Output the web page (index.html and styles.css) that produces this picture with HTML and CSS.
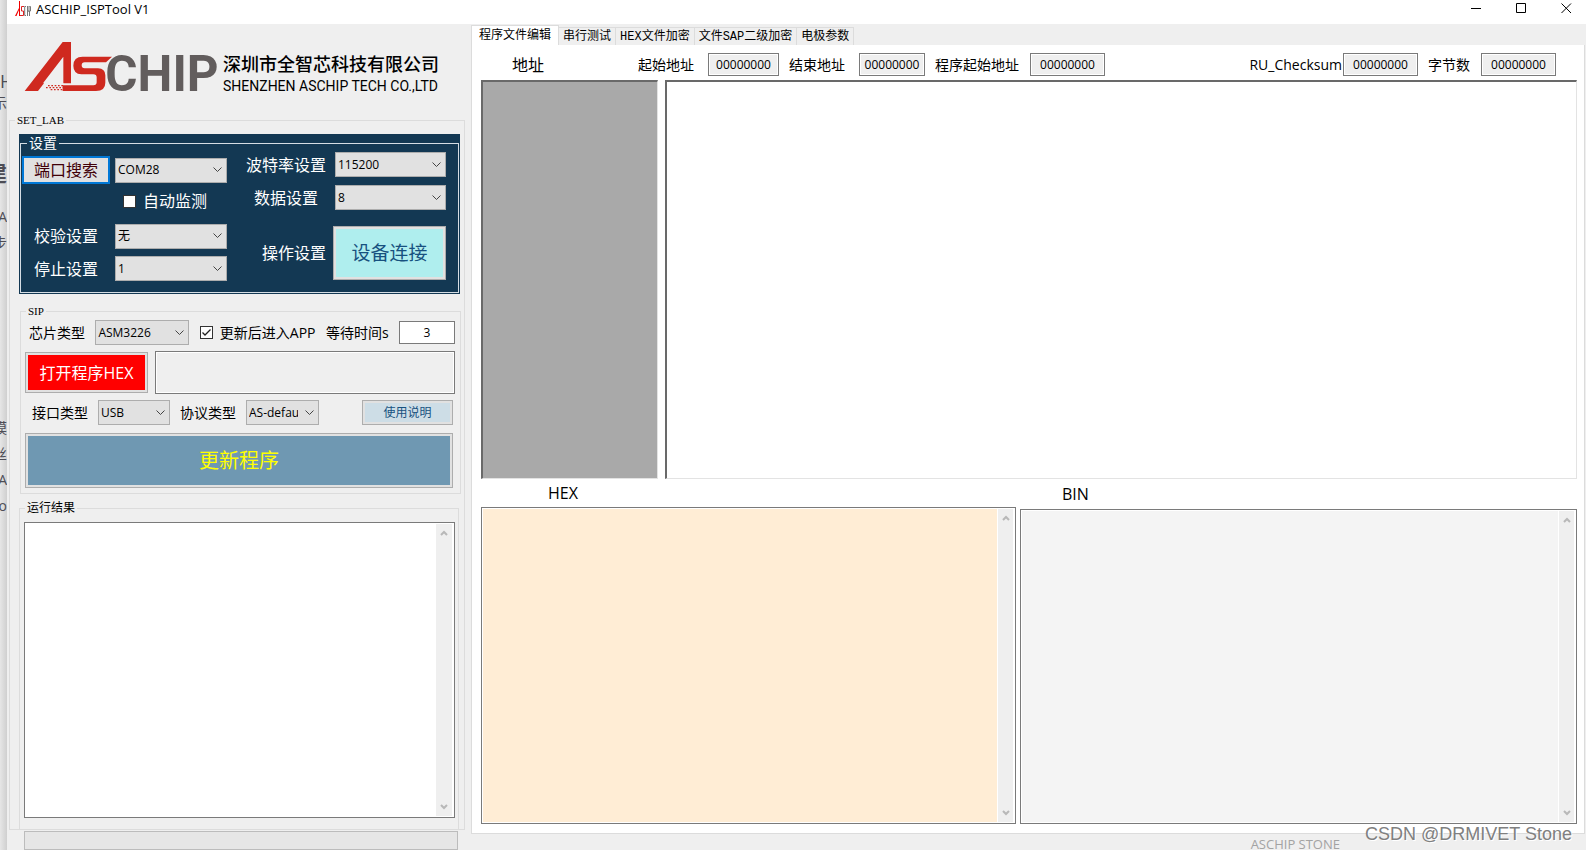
FILE: index.html
```html
<!DOCTYPE html>
<html lang="zh-CN">
<head>
<meta charset="utf-8">
<title>ASCHIP_ISPTool V1</title>
<link rel="stylesheet" href="styles.css">
</head>
<body>
<div class="desktop">
  <aside class="behind" aria-hidden="true">
    <span class="behind-line behind-h">H</span>
    <span class="behind-line">示</span>
    <span class="behind-line behind-bold">建</span>
    <span class="behind-line">A</span>
    <span class="behind-line behind-gap">步</span>
    <span class="behind-line">模</span>
    <span class="behind-line">丝</span>
    <span class="behind-line">A</span>
    <span class="behind-line">ro</span>
  </aside>

  <div class="window">
    <header class="titlebar">
      <svg class="app-icon" viewBox="0 0 16 16" aria-hidden="true">
        <path d="M0 15 L4 7 V0 H5 V15 H4 V9 L1.500 15Z" fill="#f00000"/>
        <path d="M9 5.500 H6.500 V10 H8.500 V14.500 H5" fill="none" stroke="#e02020"/>
        <path d="M11 5.500 H9.700 V14.500 H11 M12.500 5 V15 M12.500 10 H14 M14 5 V11 M14.500 5.500 H15.500 V10 H14.500 V15" fill="none" stroke="#777"/>
      </svg>
      <h1 class="title">ASCHIP_ISPTool V1</h1>
      <div class="window-buttons">
        <button class="window-button" aria-label="最小化"><svg viewBox="0 0 11 11"><path d="M0 5.500 H10"/></svg></button>
        <button class="window-button" aria-label="最大化"><svg viewBox="0 0 11 11"><path d="M.5 .5 H9.500 V9.500 H.5Z"/></svg></button>
        <button class="window-button" aria-label="关闭"><svg viewBox="0 0 11 11"><path d="M.5 .5 L10 10 M10 .5 L.5 10"/></svg></button>
      </div>
    </header>

    <div class="content">
      <section class="side">
        <div class="brand">
          <svg class="brand-mark" viewBox="0 0 600 186" role="img" aria-label="ASCHIP">
            <path fill="#cf291f" d="M14 165 L128 18 H153 V142 H130 V62 L70 140 L78 152 L72 165Z"/>
            <path fill="#efefef" d="M54 165 L72 142 H130 V165Z"/>
            <path fill="#cf291f" d="M276 62 L258 79 H194 Q185 79 185 88 Q185 97 194 97 H234 Q256 98 256 118 V140 Q256 165 228 165 H128 V148 H220 Q230 148 230 139 V124 Q230 115 220 115 H184 Q160 113 160 89 Q160 62 188 62Z"/>
            <path fill="none" stroke="#cf291f" stroke-width="4" stroke-dasharray="5 5" d="M84 149 H130 M78 155 H130 M92 161 H130"/>
            <text class="brand-chip" x="256" y="165">CHIP</text>
          </svg>
          <div class="brand-names">
            <span class="brand-cn">深圳市全智芯科技有限公司</span>
            <span class="brand-en">SHENZHEN ASCHIP TECH CO.,LTD</span>
          </div>
        </div>

        <fieldset class="group set-lab">
          <legend class="legend-mono">SET_LAB</legend>

          <div class="serial">
            <fieldset class="serial-group">
              <legend>设置</legend>
              <div class="serial-left">
                <button class="search-button">端口搜索</button>
                <select class="select" aria-label="端口"><option>COM28</option></select>
                <label class="auto-check"><input type="checkbox" class="check check-light">自动监测</label>
                <label for="parity">校验设置</label>
                <select class="select" id="parity"><option>无</option></select>
                <label for="stop">停止设置</label>
                <select class="select" id="stop"><option>1</option></select>
              </div>
              <div class="serial-right">
                <label for="baud">波特率设置</label>
                <select class="select" id="baud"><option>115200</option></select>
                <label for="data">数据设置</label>
                <select class="select" id="data"><option>8</option></select>
                <span class="action-label">操作设置</span>
                <button class="connect-button">设备连接</button>
              </div>
            </fieldset>
          </div>

          <fieldset class="group sip">
            <legend class="legend-mono">SIP</legend>
            <div class="sip-chip">
              <label for="chip">芯片类型</label>
              <select class="select select-chip" id="chip"><option>ASM3226</option></select>
              <label class="app-check"><input type="checkbox" class="check" checked>更新后进入APP</label>
              <label for="wait">等待时间s</label>
              <input class="wait" id="wait" value="3">
            </div>
            <div class="sip-file">
              <button class="open-button">打开程序HEX</button>
              <input class="file-path" aria-label="程序文件" readonly>
            </div>
            <div class="sip-port">
              <label for="port">接口类型</label>
              <select class="select select-port" id="port"><option>USB</option></select>
              <label for="protocol">协议类型</label>
              <select class="select select-protocol" id="protocol"><option>AS-default</option></select>
              <button class="help-button">使用说明</button>
            </div>
            <button class="update-button">更新程序</button>
          </fieldset>

          <fieldset class="group results">
            <legend>运行结果</legend>
            <div class="pane">
              <textarea class="pane-text" aria-label="运行结果" readonly></textarea>
              <div class="scroll"><svg viewBox="0 0 8 6"><path d="M1 5 L4 2 L7 5"/></svg><svg viewBox="0 0 8 6"><path d="M1 1 L4 4 L7 1"/></svg></div>
            </div>
          </fieldset>
        </fieldset>

        <div class="progress" role="progressbar" aria-label="进度"></div>
      </section>

      <main class="main">
        <nav class="tabs" role="tablist">
          <button class="tab tab-active" role="tab">程序文件编辑</button>
          <button class="tab" role="tab">串行测试</button>
          <button class="tab" role="tab">HEX文件加密</button>
          <button class="tab" role="tab">文件SAP二级加密</button>
          <button class="tab" role="tab">电极参数</button>
        </nav>
        <div class="page">
          <div class="fields">
            <span class="address">地址</span>
            <label class="field">起始地址<input class="hex hex-start" value="00000000"></label>
            <label class="field">结束地址<input class="hex hex-end" value="00000000"></label>
            <label class="field field-near">程序起始地址<input class="hex" value="00000000"></label>
            <label class="field field-sum">RU_Checksum<input class="hex" value="00000000"></label>
            <label class="field field-near">字节数<input class="hex" value="00000000"></label>
          </div>
          <div class="editor">
            <div class="editor-address"></div>
            <div class="editor-data"></div>
          </div>
          <div class="dumps">
            <div class="dump dump-hex">
              <label for="hex">HEX</label>
              <div class="pane">
                <textarea class="pane-text" id="hex"></textarea>
                <div class="scroll"><svg viewBox="0 0 8 6"><path d="M1 5 L4 2 L7 5"/></svg><svg viewBox="0 0 8 6"><path d="M1 1 L4 4 L7 1"/></svg></div>
              </div>
            </div>
            <div class="dump dump-bin">
              <label for="bin">BIN</label>
              <div class="pane">
                <textarea class="pane-text" id="bin"></textarea>
                <div class="scroll"><svg viewBox="0 0 8 6"><path d="M1 5 L4 2 L7 5"/></svg><svg viewBox="0 0 8 6"><path d="M1 1 L4 4 L7 1"/></svg></div>
              </div>
            </div>
          </div>
        </div>
        <footer class="status">ASCHIP STONE</footer>
      </main>
    </div>
  </div>
  <div class="watermark">CSDN @DRMIVET Stone</div>
</div>
</body>
</html>
```
FILE: styles.css
```css
* {
  box-sizing: border-box;
}

body {
  margin: 0;
  font-family: "Open Sans", "Noto Sans CJK SC", sans-serif;
  font-size: 14px;
  line-height: 16px;
  color: #000;
}

button,
input,
select,
textarea {
  margin: 0;
  padding: 0;
  border-radius: 0;
  font: inherit;
  color: inherit;
}

fieldset {
  min-width: 0;
  margin: 0;
  padding: 0;
}

label,
button {
  white-space: nowrap;
}

.desktop {
  position: relative;
  display: flex;
  min-height: 100vh;
  overflow: hidden;
}

/* Sliver of the page behind the window */
.behind {
  flex: 0 0 7px;
  display: flex;
  flex-direction: column;
  align-items: flex-end;
  padding-top: 72px;
  overflow: hidden;
  background: linear-gradient(to right, #e6e6e6, #cfcfcf);
  color: #4d4d55;
}

.behind-line {
  flex: none;
  height: 26px;
  line-height: 26px;
}

.behind-h {
  align-self: flex-start;
  height: 18px;
  line-height: 18px;
  font-size: 18px;
}

.behind-bold {
  margin: 43px 0 19px;
  font-size: 22px;
  font-weight: 700;
}

.behind-gap {
  margin-bottom: 159px;
}

/* Window frame */
.window {
  flex: 1;
  min-width: 0;
  display: flex;
  flex-direction: column;
  background: #efefef;
}

.titlebar {
  flex: none;
  display: flex;
  align-items: center;
  height: 24px;
  padding: 0 0 7px 8px;
  background: #fff;
}

.app-icon {
  width: 16px;
  height: 16px;
}

.title {
  margin: 0 0 0 5px;
  font-size: 13px;
  font-weight: 400;
}

.window-buttons {
  display: flex;
  gap: 5px;
  margin-left: auto;
}

.window-button {
  display: flex;
  align-items: center;
  justify-content: center;
  width: 40px;
  height: 16px;
  border: 0;
  background: none;
}

.window-button svg {
  width: 11px;
  height: 11px;
  fill: none;
  stroke: #000;
}

.content {
  flex: 1;
  display: flex;
  min-height: 0;
}

/* Left column */
.side {
  flex: 0 0 464px;
  display: flex;
  flex-direction: column;
  padding: 12px 6px 0 2px;
}

.brand {
  display: flex;
  align-items: flex-start;
  height: 78px;
  padding-left: 11px;
}

.brand-mark {
  flex: none;
  width: 200px;
  height: 62px;
}

.brand-chip {
  font-family: Roboto, sans-serif;
  font-size: 148px;
  font-weight: 700;
  fill: #625d5d;
}

.brand-names {
  display: flex;
  flex-direction: column;
  padding: 18px 0 0 3px;
  white-space: nowrap;
}

.brand-cn {
  font-size: 18px;
  font-weight: 500;
  line-height: 20px;
}

.brand-en {
  padding-top: 3px;
  font-family: Roboto, sans-serif;
  font-size: 14px;
  line-height: 18px;
}

.group {
  display: flex;
  flex-direction: column;
  border: 1px solid #dcdcdc;
}

.group > legend {
  margin-left: 1px;
  padding: 0 2px;
  font-size: 12px;
  line-height: 14px;
}

.group > .legend-mono {
  font-family: "Liberation Serif", serif;
  font-size: 11px;
  line-height: 12px;
}

.set-lab {
  flex: 1;
  padding: 8px 2px 0 9px;
}

.set-lab > .legend-mono {
  margin-left: -4px;
}

.serial {
  margin-right: 2px;
  padding: 2px 1px 1px;
  background: #133853;
  color: #fff;
  font-size: 16px;
}

.serial-group {
  display: flex;
  gap: 19px;
  padding: 0 12px 2px 1px;
  border: 1px solid #d5dde4;
}

.serial-group legend {
  margin-left: 5px;
  padding: 0 2px;
  font-size: 14px;
  line-height: 14px;
}

.serial-left {
  display: grid;
  grid-template-columns: 88px 112px;
  grid-template-rows: 28px 34px 36px 29px;
  column-gap: 5px;
  align-items: center;
  justify-items: center;
  padding-top: 6px;
}

.serial-right {
  flex: 1;
  display: grid;
  grid-template-columns: 80px 1fr;
  grid-template-rows: 29px 37px 74px;
  column-gap: 7px;
  align-items: center;
  justify-items: center;
}

.serial-right .select {
  width: 111px;
  justify-self: end;
}

.select {
  appearance: none;
  width: 100%;
  height: 25px;
  padding: 0 20px 0 2px;
  border: 1px solid #adadad;
  background: #e1e1e1 url("data:image/svg+xml,%3Csvg xmlns='http://www.w3.org/2000/svg' width='9' height='6'%3E%3Cpath d='M.5 .5 L4.5 4.500 L8.500 .5' fill='none' stroke='%23444'/%3E%3C/svg%3E") no-repeat right 4px center;
  color: #000;
  font-size: 12px;
}

.search-button {
  width: 100%;
  height: 28px;
  border: 2px solid #0078d7;
  background: #e1e1e1;
  color: #400008;
}

.action-label {
  justify-self: end;
}

.auto-check,
.app-check {
  display: flex;
  align-items: center;
  gap: 7px;
}

.auto-check {
  grid-column: 2;
  justify-self: start;
  padding-left: 8px;
}

.check {
  appearance: none;
  width: 13px;
  height: 13px;
  border: 1px solid #333;
  background: #fff;
}

.check:checked {
  background: #fff url("data:image/svg+xml,%3Csvg xmlns='http://www.w3.org/2000/svg' width='11' height='11'%3E%3Cpath d='M1.500 5.500 L4 8 L9.500 2.500' fill='none' stroke='%23222' stroke-width='1.300'/%3E%3C/svg%3E") no-repeat center;
}

.connect-button,
.open-button,
.help-button,
.update-button {
  border: 1px solid #adadad;
  outline: 2px solid #e1e1e1;
  outline-offset: -3px;
}

.connect-button {
  width: 100%;
  height: 54px;
  background: #afeeee;
  color: #17517f;
  font-size: 19px;
}

.sip {
  gap: 6px;
  margin: 11px 1px 0 1px;
  padding: 3px 5px 5px 4px;
}

.sip-chip {
  display: flex;
  align-items: center;
  justify-content: space-between;
  padding-left: 4px;
}

.select-chip {
  width: 94px;
}

.wait {
  width: 56px;
  height: 23px;
  border: 1px solid #7a7a7a;
  background: #fff;
  font-size: 12px;
  text-align: center;
}

.sip-file {
  display: flex;
  align-items: center;
  gap: 7px;
}

.open-button {
  width: 123px;
  height: 41px;
  background: #f00;
  color: #fff;
  font-size: 16px;
}

.file-path {
  flex: 1;
  min-width: 0;
  height: 43px;
  border: 1px solid #7a7a7a;
  outline: 1px solid #fff;
  outline-offset: -2px;
  background: #efefef;
}

.sip-port {
  display: flex;
  align-items: center;
  gap: 10px;
  padding: 0 2px 0 7px;
}

.select-port {
  width: 72px;
}

.select-protocol {
  width: 73px;
}

.help-button {
  width: 91px;
  height: 25px;
  margin-left: auto;
  background: #cddde6;
  color: #17517f;
  font-size: 12px;
}

.update-button {
  height: 55px;
  margin: 2px 2px 0 0;
  background: #6f98b2;
  color: #ff0;
  font-size: 20px;
}

.results {
  flex: 1;
  margin: 7px 3px 0 0;
  padding: 7px 3px 11px 4px;
  border-bottom: 0;
}

/* Text panes with a scroll bar */
.pane {
  flex: 1;
  display: flex;
  padding: 1px;
  border: 1px solid #7a7a7a;
  background: #fff;
}

.pane-text {
  flex: 1;
  min-width: 0;
  border: 0;
  background: none;
  resize: none;
}

.scroll {
  flex: 0 0 17px;
  display: flex;
  flex-direction: column;
  align-items: center;
  justify-content: space-between;
  padding: 6px 0;
  border-right: 1px solid #fff;
  background: #efefef;
}

.scroll svg {
  width: 8px;
  height: 6px;
  fill: none;
  stroke: #b8b8b8;
  stroke-width: 2;
}

.progress {
  flex: none;
  height: 19px;
  margin: 1px 7px 0 15px;
  border: 1px solid #bcbcbc;
  background: #e6e6e6;
}

/* Right column */
.main {
  flex: 1;
  min-width: 0;
  display: flex;
  flex-direction: column;
  padding-right: 1px;
}

.tabs {
  display: flex;
  align-items: flex-end;
  height: 22px;
}

.tab {
  height: 19px;
  padding: 0 4px;
  border: 1px solid #dcdcdc;
  border-left: 0;
  background: #efefef;
  font-family: "Liberation Mono", "Noto Sans CJK SC", monospace;
  font-size: 12px;
  line-height: 18px;
}

.tab-active {
  height: 21px;
  padding: 0 7px;
  border-left: 1px solid #dcdcdc;
  border-bottom-color: #fff;
  background: #fff;
}

.page {
  flex: 1;
  display: flex;
  flex-direction: column;
  margin-top: -1px;
  padding: 0 7px 9px 9px;
  border: 1px solid #dcdcdc;
  border-top: 0;
  background: #fff;
}

.fields {
  display: flex;
  align-items: center;
  gap: 10px;
  height: 35px;
  padding: 4px 21px 0 31px;
}

.address {
  margin-right: 84px;
  font-size: 16px;
}

.field {
  display: flex;
  align-items: center;
  gap: 14px;
}

.field-near {
  gap: 11px;
}

.field-sum {
  gap: 1px;
  margin-left: auto;
}

.hex {
  width: 75px;
  height: 23px;
  border: 1px solid #7a7a7a;
  outline: 1px solid #fff;
  outline-offset: -2px;
  background: #efefef;
  font-size: 12px;
  text-align: center;
}

.hex-start {
  width: 71px;
}

.hex-end {
  width: 66px;
}

.editor {
  flex: 399;
  display: flex;
  gap: 7px;
}

.editor-address,
.editor-data {
  border: 2px solid #696969;
  border-right: 1px solid #e3e3e3;
  border-bottom: 1px solid #e3e3e3;
}

.editor-address {
  flex: 0 0 177px;
  background: #a9a9a9;
}

.editor-data {
  flex: 1;
  background: #fff;
}

.dumps {
  flex: 345;
  display: flex;
  gap: 4px;
}

.dump {
  display: flex;
  flex-direction: column;
  min-width: 0;
}

.dump label {
  font-size: 16px;
}

.dump-hex {
  flex: 535;
}

.dump-hex label {
  padding-left: 67px;
  line-height: 28px;
}

.dump-hex .pane-text {
  background: #ffedd5;
}

.dump-bin {
  flex: 557;
}

.dump-bin label {
  padding-left: 42px;
  line-height: 30px;
}

.dump-bin .pane-text {
  background: #f4f4f4;
}

.dump .scroll {
  border-left: 1px solid #fff;
}

.status {
  height: 16px;
  padding: 2px 245px 0 0;
  color: #a3a3a3;
  font-size: 13px;
  line-height: 16px;
  text-align: right;
  overflow: hidden;
}

.watermark {
  position: absolute;
  right: 14px;
  bottom: 5px;
  color: #808080;
  font-family: "Liberation Sans", sans-serif;
  font-size: 18px;
  line-height: 22px;
  text-shadow: 1px 1px 0 #fff;
}
```
